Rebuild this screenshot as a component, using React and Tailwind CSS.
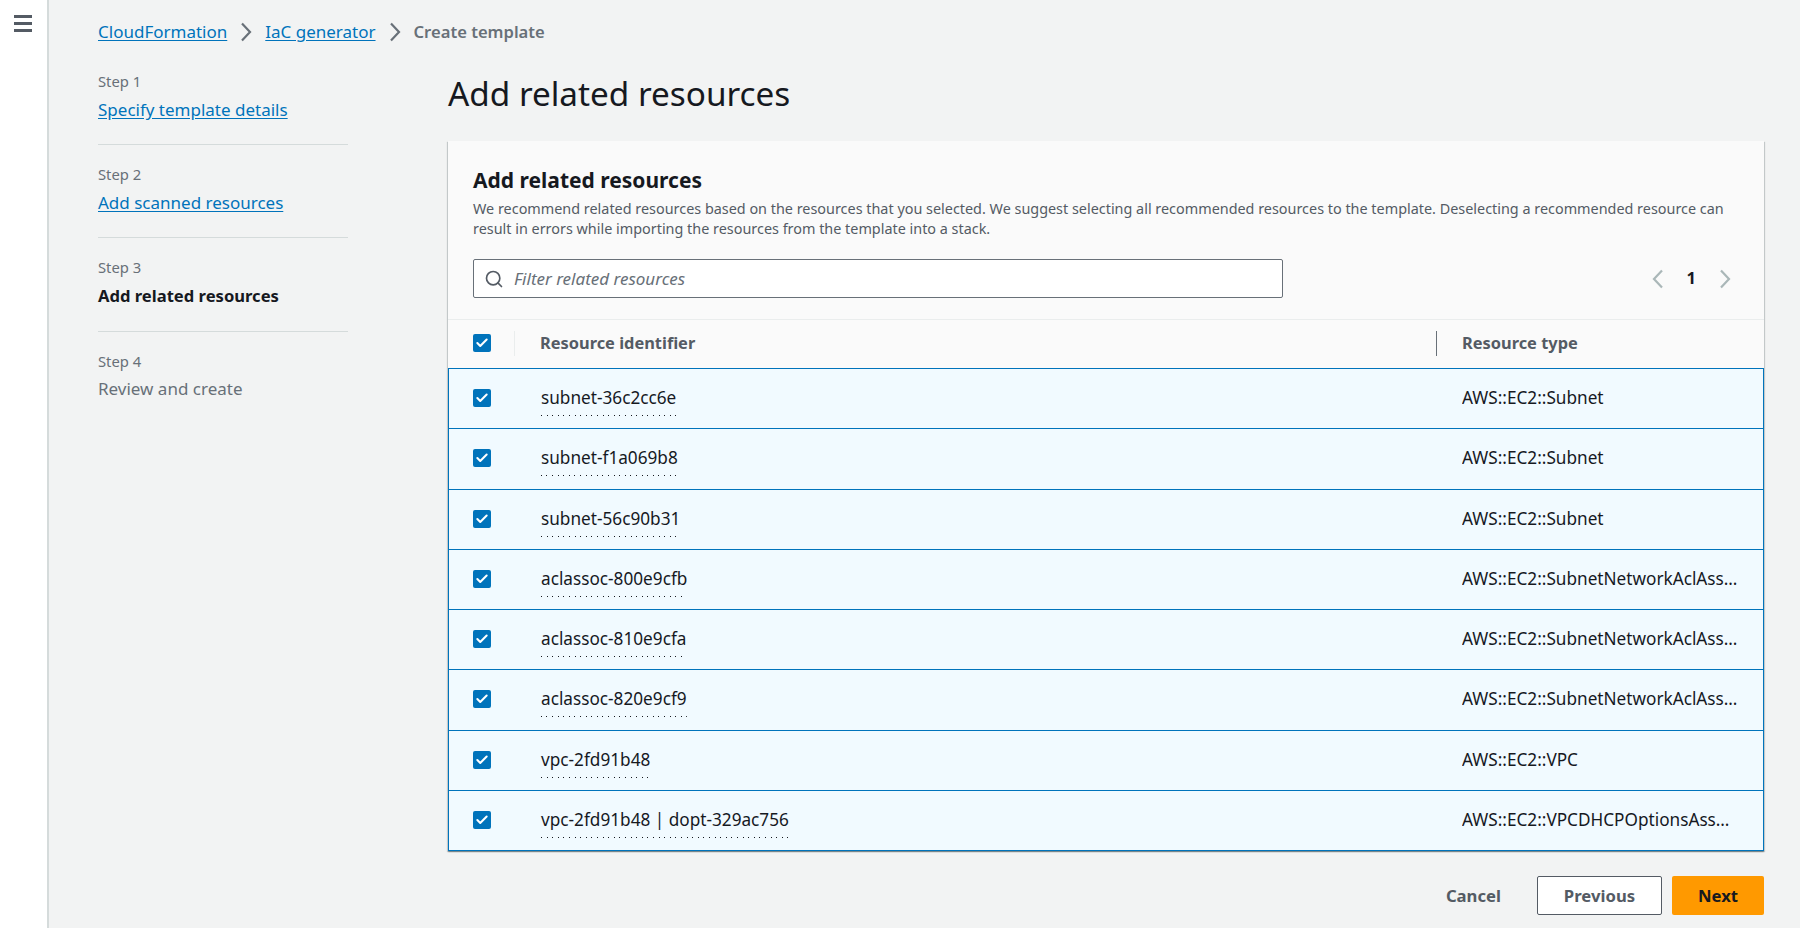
import { Search, Check } from "lucide-react";

const rows = [
  ["subnet-36c2cc6e", "AWS::EC2::Subnet"],
  ["subnet-f1a069b8", "AWS::EC2::Subnet"],
  ["subnet-56c90b31", "AWS::EC2::Subnet"],
  ["aclassoc-800e9cfb", "AWS::EC2::SubnetNetworkAclAssociation"],
  ["aclassoc-810e9cfa", "AWS::EC2::SubnetNetworkAclAssociation"],
  ["aclassoc-820e9cf9", "AWS::EC2::SubnetNetworkAclAssociation"],
  ["vpc-2fd91b48", "AWS::EC2::VPC"],
  ["vpc-2fd91b48 | dopt-329ac756", "AWS::EC2::VPCDHCPOptionsAssociation"],
];

const steps = [
  { step: "Step 1", label: "Specify template details", link: true, box: "h-[81px] border-b border-[#d5dbdb] pt-[7px]" },
  { step: "Step 2", label: "Add scanned resources", link: true, box: "h-[93px] border-b border-[#d5dbdb] pt-[19px]" },
  { step: "Step 3", label: "Add related resources", active: true, box: "h-[94px] border-b border-[#d5dbdb] pt-[19px]" },
  { step: "Step 4", label: "Review and create", box: "pt-[19px]" },
];

function Checkbox() {
  return (
    <span className="flex h-[18px] w-[18px] items-center justify-center rounded-[2px] bg-[#0073bb]">
      <Check size={14} strokeWidth={3.5} className="text-white" />
    </span>
  );
}

function Chevron({ className }) {
  return (
    <svg width="12" height="20" viewBox="0 0 12 20" fill="none" stroke="currentColor" strokeWidth="2.2" className={className}>
      <path d="M2 1.5 10 10l-8 8.5" />
    </svg>
  );
}

export default function App() {
  return (
    <div className="flex h-[928px] overflow-hidden bg-[#f2f3f3] font-['Noto_Sans',sans-serif] text-[17px] text-[#16191f]">
      {/* Collapsed side nav */}
      <div className="w-[49px] shrink-0 border-r-2 border-[#d5dbdb] bg-white pl-[14px] pt-[15px]">
        <div className="flex w-[18px] flex-col gap-[4px]">
          <span className="h-[3px] bg-[#545b64]" />
          <span className="h-[3px] bg-[#545b64]" />
          <span className="h-[3px] bg-[#545b64]" />
        </div>
      </div>

      <div className="min-w-0 flex-1 pl-[49px] pr-[36px]">
        {/* Breadcrumbs */}
        <div className="flex h-[64px] items-center">
          <a className="text-[#0073bb] underline underline-offset-2">CloudFormation</a>
          <Chevron className="mx-[13px] text-[#687078]" />
          <a className="text-[#0073bb] underline underline-offset-2">IaC generator</a>
          <Chevron className="mx-[13px] text-[#687078]" />
          <span className="text-[16.6px] font-semibold text-[#687078]">Create template</span>
        </div>

        <div className="flex">
          {/* Wizard steps */}
          <div className="w-[250px] shrink-0">
            {steps.map((s) => (
              <div key={s.step} className={s.box}>
                <div className="text-[14.8px] leading-[20px] text-[#687078]">{s.step}</div>
                <div
                  className={
                    "leading-[20px] " +
                    (s.link ? "mt-[9px] text-[#0073bb] underline underline-offset-2 " : "") +
                    (s.active ? "mt-[9px] text-[16.6px] font-bold " : "") +
                    (!s.link && !s.active ? "mt-[8px] text-[#687078]" : "")
                  }
                >
                  {s.label}
                </div>
              </div>
            ))}
          </div>

          <div className="ml-[100px] min-w-0 flex-1">
            <h1 className="text-[33.3px] leading-[58px]">Add related resources</h1>

            {/* Resource table */}
            <div className="mt-[19px] bg-white shadow-[0_1px_1px_0_rgba(0,28,36,0.3),1px_1px_1px_0_rgba(0,28,36,0.15),-1px_1px_1px_0_rgba(0,28,36,0.15)]">
              <div className="border-b border-[#eaeded] bg-[#fafafa] px-[25px] pb-[21px] pt-[25px]">
                <h2 className="text-[21px] font-bold leading-[28px]">Add related resources</h2>
                <p className="mt-[5px] text-[14.4px] leading-[20px] text-[#545b64]">
                  We recommend related resources based on the resources that you selected. We suggest selecting all recommended resources to the template. Deselecting a recommended resource can result in errors while importing the resources from the template into a stack.
                </p>
                <div className="mt-[20px] flex items-center justify-between">
                  <div className="flex h-[39px] w-[810px] items-center rounded-[2px] border border-[#687078] bg-white pl-[10px]">
                    <Search size={20} strokeWidth={2} className="text-[#545b64]" />
                    <span className="ml-[10px] italic text-[#687078]">Filter related resources</span>
                  </div>
                  <div className="flex items-center pr-[8px]">
                    <Chevron className="rotate-180 text-[#aab7b8]" />
                    <span className="mx-[23px] text-[16.5px] font-bold">1</span>
                    <Chevron className="text-[#aab7b8]" />
                  </div>
                </div>
              </div>

              <div className="flex h-[48px] items-center bg-[#fafafa] pb-[2px] text-[16.4px] font-bold text-[#545b64]">
                <div className="flex h-[25px] w-[67px] shrink-0 items-center border-r border-[#eaeded] pl-[25px]">
                  <Checkbox />
                </div>
                <div className="flex h-[25px] flex-1 items-center border-r border-[#687078] pl-[25px]">Resource identifier</div>
                <div className="w-[327px] shrink-0 pl-[25px]">Resource type</div>
              </div>

              {rows.map(([id, type], i) => (
                <div
                  key={id}
                  className={
                    "flex h-[61.25px] items-center border border-[#0073bb] bg-[#f1faff] pb-[1px] text-[17.2px] " + (i > 0 ? "-mt-px" : "")
                  }
                >
                  <div className="w-[92px] shrink-0 pl-[24px]">
                    <Checkbox />
                  </div>
                  <div className="min-w-0 flex-1">
                    <span className="inline-block bg-[repeating-linear-gradient(90deg,#16191f_0,#16191f_1px,transparent_1px,transparent_5.6px)] bg-[length:100%_1px] bg-bottom bg-no-repeat py-[6px] leading-[24px]">
                      {id}
                    </span>
                  </div>
                  <div className="w-[301px] shrink-0 truncate pr-[24px]">{type}</div>
                </div>
              ))}
            </div>

            {/* Footer actions */}
            <div className="mt-[25px] flex items-center justify-end text-[16.7px] font-bold">
              <span className="mr-[36px] text-[#545b64]">Cancel</span>
              <button className="h-[39px] w-[125px] rounded-[2px] border border-[#545b64] bg-white text-[#545b64]">Previous</button>
              <button className="ml-[10px] h-[39px] w-[92px] rounded-[2px] bg-[#ff9900]">Next</button>
            </div>
          </div>
        </div>
      </div>
    </div>
  );
}
